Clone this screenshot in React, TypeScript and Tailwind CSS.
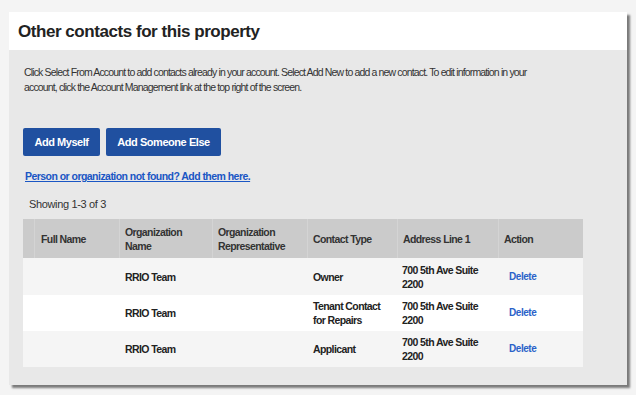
import React from "react";

const rows = [
  { org: "RRIO Team", type: ["Owner"], addr: ["700 5th Ave Suite", "2200"], bg: "bg-[#f5f5f5]", h: "h-[37px]" },
  { org: "RRIO Team", type: ["Tenant Contact", "for Repairs"], addr: ["700 5th Ave Suite", "2200"], bg: "bg-white", h: "h-[36px]" },
  { org: "RRIO Team", type: ["Applicant"], addr: ["700 5th Ave Suite", "2200"], bg: "bg-[#f5f5f5]", h: "h-[36px]" },
];

const cols = "grid grid-cols-[12px_85px_93px_95px_90px_101px_84px]";

export default function App() {
  return (
    <div className="w-[636px] h-[395px] bg-[#f4f4f4] pt-[12px] pl-[9px] font-['Liberation_Sans',Arial,sans-serif] text-[#222]">
      <div className="w-[618px] h-[373px] flex flex-col shadow-[3px_3px_2px_rgba(0,0,0,0.5)] bg-[#e8e8e8]">
        <div className="h-[38px] bg-white flex items-center pl-[9px]">
          <h1 className="text-[17px] font-bold text-[#222] leading-none tracking-[-0.45px]">Other contacts for this property</h1>
        </div>
        <div className="flex flex-col px-[14px] pt-[15px]">
          <p className="w-[522px] text-[10.5px] leading-[15px] text-[#333] pl-[1px] tracking-[-0.85px]">
            Click Select From Account to add contacts already in your account. Select Add New to add a new contact. To edit information in your account, click the Account Management link at the top right of the screen.
          </p>
          <div className="flex gap-[6px] mt-[33px]">
            <button className="w-[77px] h-[28px] rounded-[2px] bg-[#2050a0] text-white text-[11px] font-bold tracking-[-0.45px]">Add Myself</button>
            <button className="w-[115px] h-[28px] rounded-[2px] bg-[#2050a0] text-white text-[11px] font-bold tracking-[-0.45px]">Add Someone Else</button>
          </div>
          <a href="#" className="mt-[13px] ml-[2px] text-[10.5px] leading-[14px] font-bold underline text-[#1a56c4] self-start tracking-[-0.54px]">
            Person or organization not found? Add them here.
          </a>
          <div className="mt-[14px] ml-[6px] text-[11px] leading-[14px] text-[#333] tracking-[-0.35px]">Showing 1-3 of 3</div>
          <div className="mt-[8px] w-[560px]">
            <div className={`${cols} h-[39px] bg-[#cbcbcb] text-[10.5px] leading-[14px] font-bold text-[#333] tracking-[-0.6px]`}>
              {["", "Full Name", "Organization Name", "Organization Representative", "Contact Type", "Address Line 1", "Action"].map((t, i) => (
                <div key={i} className={`flex items-center pl-[5px] pr-[3px] ${i < 6 ? "border-r border-[#d4d4d4]" : ""} ${i === 1 ? "pl-[6px]" : ""}`}>
                  {t === "Organization Name" ? (
                    <span>Organization<br />Name</span>
                  ) : t === "Organization Representative" ? (
                    <span>Organization<br />Representative</span>
                  ) : (
                    <span>{t}</span>
                  )}
                </div>
              ))}
            </div>
            {rows.map((r, i) => (
              <div key={i} className={`${cols} ${r.h} ${r.bg} text-[10.5px] leading-[14px] font-bold text-[#222] tracking-[-0.6px]`}>
                <div />
                <div />
                <div className="flex items-center pl-[5px]">{r.org}</div>
                <div />
                <div className="flex items-center pl-[5px]">
                  <span>{r.type.map((t, j) => (<React.Fragment key={j}>{j > 0 && <br />}{t}</React.Fragment>))}</span>
                </div>
                <div className="flex items-center pl-[4px]">
                  <span>{r.addr[0]}<br />{r.addr[1]}</span>
                </div>
                <div className="flex items-center pl-[10px]">
                  <a href="#" className="text-[#2a62c9] text-[10px] tracking-[-0.45px]">Delete</a>
                </div>
              </div>
            ))}
          </div>
        </div>
      </div>
    </div>
  );
}
